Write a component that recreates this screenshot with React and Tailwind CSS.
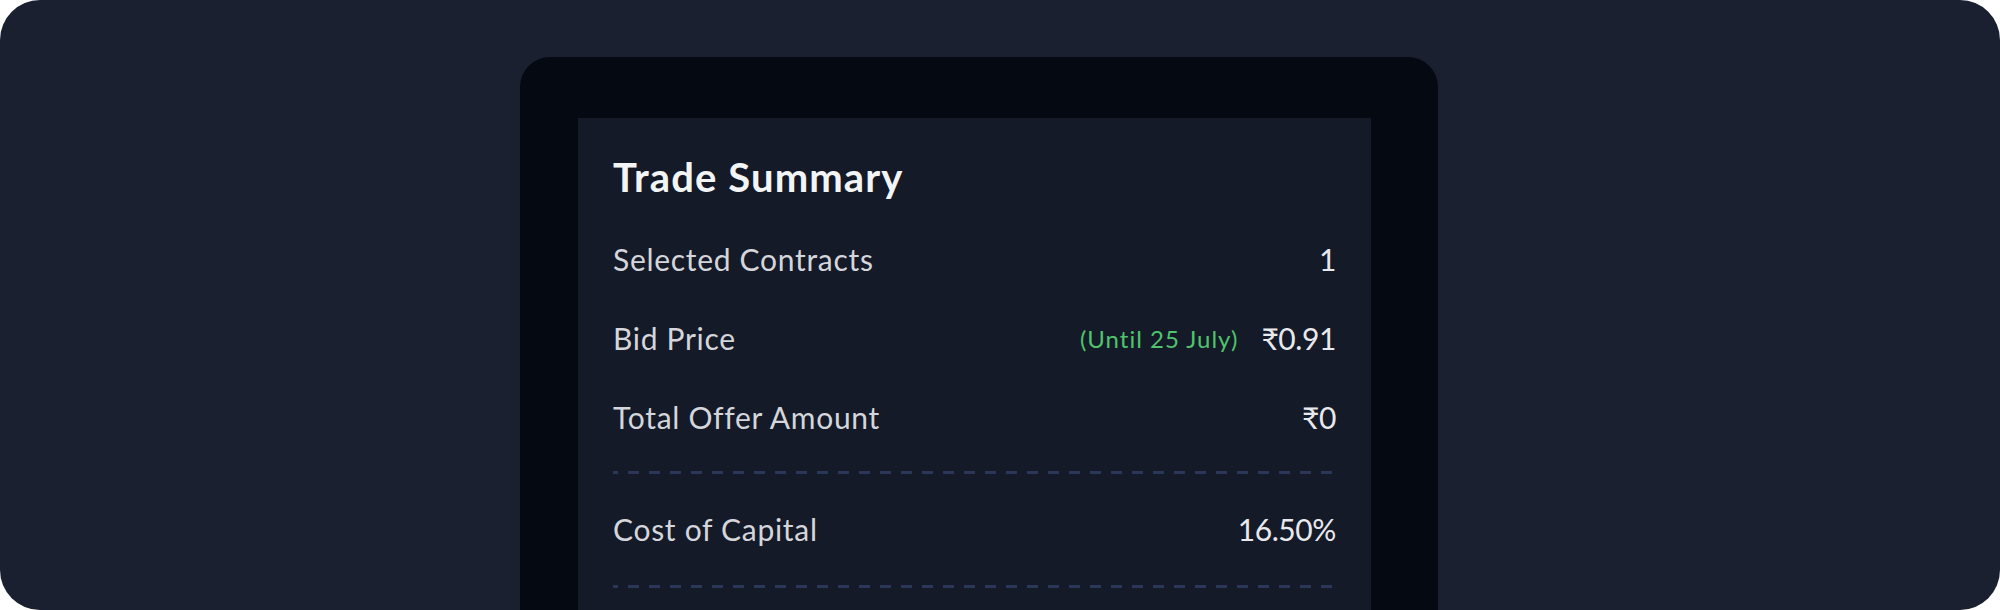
import React from "react";

const dash =
  "h-[3px] w-full bg-[repeating-linear-gradient(90deg,#2b3759_0_5px,transparent_5px_15px,#2b3759_15px_21px)]";

function Row({ label, children }) {
  return (
    <div className="flex h-[79px] items-center justify-between">
      <span className="text-[30px] tracking-[0.7px] text-[#d4d6db]">{label}</span>
      <div className="flex items-center gap-[23px]">{children}</div>
    </div>
  );
}

export default function App() {
  return (
    <div
      className="h-[610px] w-[2000px] overflow-hidden bg-white"
      style={{ fontFamily: "Lato, 'Open Sans', sans-serif" }}
    >
      <div className="h-[610px] w-full overflow-hidden rounded-[40px] bg-[#1b2031] pt-[57px] pl-[520px]">
        <div className="h-[600px] w-[918px] rounded-t-[30px] bg-[#050911] pt-[61px] pl-[58px]">
          <div className="h-[540px] w-[793px] bg-[#151a28] px-[35px] pt-[35px]">
            <h1 className="h-[48px] text-[40px] font-bold leading-[48px] tracking-[1.1px] text-[#f3f4f6]">
              Trade Summary
            </h1>
            <div className="mt-[19px]">
              <Row label="Selected Contracts">
                <span className="text-[30px] tracking-[-0.4px] text-[#e8e9ec]">1</span>
              </Row>
              <Row label="Bid Price">
                <span className="text-[24px] tracking-[1px] text-[#4fc46c]">(Until 25 July)</span>
                <span className="text-[30px] tracking-[-0.4px] text-[#e8e9ec]">₹0.91</span>
              </Row>
              <Row label="Total Offer Amount">
                <span className="text-[30px] tracking-[-0.4px] text-[#e8e9ec]">₹0</span>
              </Row>
            </div>
            <div className={`my-[14px] ${dash}`} />
            <div className="mt-[16px]">
              <Row label="Cost of Capital">
                <span className="text-[30px] tracking-[-0.4px] text-[#e8e9ec]">16.50%</span>
              </Row>
            </div>
            <div className={`mt-[16px] ${dash}`} />
          </div>
        </div>
      </div>
    </div>
  );
}
